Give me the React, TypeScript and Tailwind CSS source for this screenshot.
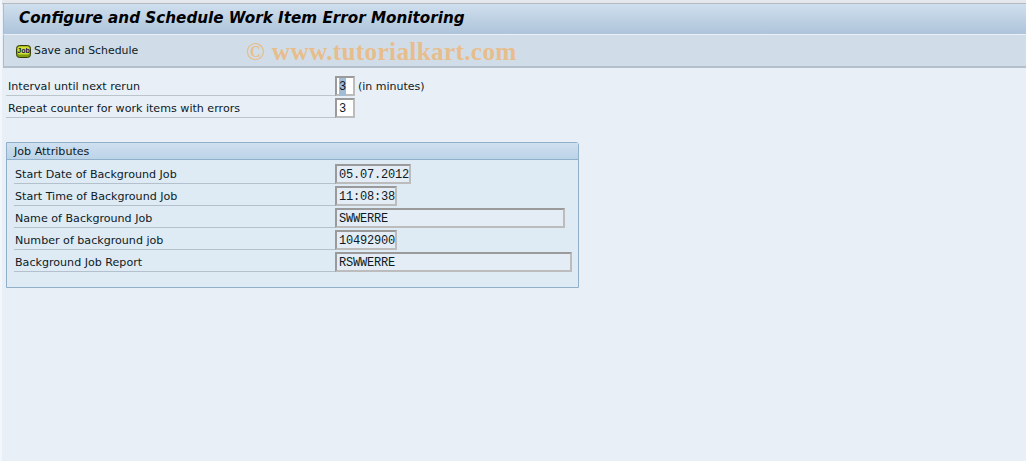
const sans = "font-['DejaVu_Sans',sans-serif]";

function JobIcon() {
  return (
    <svg width="15" height="13" viewBox="0 0 15 13" className="shrink-0">
      <rect x="0.5" y="0.5" width="14" height="12" rx="3" fill="#7f9a10" stroke="#37400c" />
      <rect x="1.5" y="1.5" width="12" height="8" rx="2" fill="#cfe02e" />
      <text x="7.5" y="8" textAnchor="middle" fontSize="7" fontWeight="700" fontFamily="Liberation Sans, sans-serif" fill="#10106a">
        Job
      </text>
    </svg>
  );
}

function Field({ value, width, bg = "bg-white" }: { value: string; width: string; bg?: string }) {
  return (
    <div
      className={`${width} ${bg} h-5 border-2 border-t-[#9a9a9a] border-l-[#9a9a9a] border-r-[#bcbcbc] border-b-[#bcbcbc] flex items-center pl-[2px] pt-[1px] font-['Liberation_Mono',monospace] text-[12px] tracking-[-0.2px] text-[#0c1a26]`}
    >
      {value}
    </div>
  );
}

function Row({ label, children }: { label: string; children: React.ReactNode }) {
  return (
    <div className="h-[22px] flex items-start">
      <div className="h-[20px] w-[329px] shrink-0 border-b border-[#bcc4cc] pl-[2px] pt-[1px] text-[11.1px] leading-[20px] text-[#0c1a26]">{label}</div>
      {children}
    </div>
  );
}

export default function App() {
  return (
    <div className={`${sans} relative w-[1026px] h-[461px] bg-[#e8eff7] pl-[3px] overflow-hidden`}>
      <div className="absolute left-0 top-0 w-[2px] h-full bg-[#f3f6fa]" />
      <div className="h-[4px] bg-[#e4e8ed] border-b border-[#b4bac2] -ml-[3px]" />
      <div className="h-[31px] bg-gradient-to-b from-[#cfdfee] to-[#aec4da] flex items-center pl-[15px] pb-[2px] border-b border-l border-b-[#e8eff7] border-l-[#b4bac2]">
        <h1 className="text-[15.2px] font-bold italic text-black whitespace-nowrap">Configure and Schedule Work Item Error Monitoring</h1>
      </div>
      <div className="h-[33px] bg-[#d0dde8] border-b-2 border-l border-b-[#b3bfca] border-l-[#b4bac2] flex items-center gap-[3px] pl-[12px] pt-[1px]">
        <JobIcon />
        <span className="text-[10.9px] pt-[1px] text-[#0c1a26]">Save and Schedule</span>
      </div>

      <div className="pl-[3px] pt-[8px]">
        <Row label="Interval until next rerun">
          <div className="w-[20px] h-5 bg-white border-2 border-t-[#9a9a9a] border-l-[#9a9a9a] border-r-[#bcbcbc] border-b-[#bcbcbc] flex items-center pl-[2px] pt-[1px] font-['Liberation_Mono',monospace] text-[12px] text-[#0c1a26]">
            <span className="bg-[#a3bcd6]">3</span>
          </div>
          <span className="ml-[3px] pt-[1px] text-[11px] leading-[20px] text-[#0c1a26]">(in minutes)</span>
        </Row>
        <Row label="Repeat counter for work items with errors">
          <Field value="3" width="w-[20px]" />
        </Row>

        <section className="w-[573px] h-[146px] mt-[22px] border border-[#90afc9] rounded-tr-[3px] bg-[#deeaf4]">
          <div className="h-[17px] bg-gradient-to-b from-[#cfe0f0] to-[#bcd3e8] border-b border-[#90afc9] pl-[7px] pt-[1px] text-[11.1px] leading-[16px] text-[#0c1a26]">
            Job Attributes
          </div>
          <div className="pl-[7px] pt-[4px]">
            {[
              ["Start Date of Background Job", "05.07.2012", "w-[76px]"],
              ["Start Time of Background Job", "11:08:38", "w-[62px]"],
              ["Name of Background Job", "SWWERRE", "w-[230px]"],
              ["Number of background job", "10492900", "w-[62px]"],
              ["Background Job Report", "RSWWERRE", "w-[237px]"],
            ].map(([label, value, width]) => (
              <div key={label} className="h-[22px] flex items-start">
                <div className="h-[20px] w-[321px] shrink-0 border-b border-[#b4c0cb] pl-[1px] pt-[1px] text-[11.1px] leading-[20px] text-[#0c1a26]">{label}</div>
                <Field value={value} width={width} bg="bg-[#e4edf5]" />
              </div>
            ))}
          </div>
        </section>
      </div>

      <div className="absolute left-[246px] top-[33px] font-['Liberation_Serif',serif] font-bold text-[25.3px] text-[#e8bd8d] whitespace-nowrap tracking-[0.3px]">
        © www.tutorialkart.com
      </div>
    </div>
  );
}
